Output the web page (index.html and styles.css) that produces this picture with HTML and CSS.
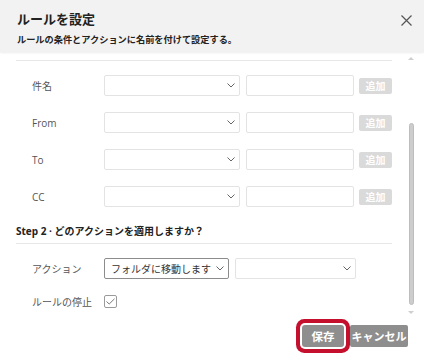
FILE: index.html
```html
<!DOCTYPE html>
<html lang="ja">
  <head>
    <meta charset="UTF-8" />
    <meta name="viewport" content="width=device-width, initial-scale=1.0" />
    <title>ルールを設定</title>
    <link rel="stylesheet" href="styles.css">
  </head>
  <body>
    <div class="dialog">
      <div class="header">
        <div class="title_row">
          <h1>ルールを設定</h1>
          <button class="close" type="button">
            <svg width="11" height="11" viewBox="0 0 11 11"><path d="M0.5 0.5L10.5 10.5M10.5 0.5L0.5 10.5" stroke="#555" stroke-width="1.2" fill="none"/></svg>
          </button>
        </div>
        <p class="sub">ルールの条件とアクションに名前を付けて設定する。</p>
      </div>

      <div class="scroll">
        <div class="content">
          <h2 class="step first">Step 1 · どの条件に当てはまる場合ですか？</h2>

          <div class="row">
            <label>件名</label>
            <div class="select"><span></span><svg width="8" height="5" viewBox="0 0 8 5"><path d="M0.5 0.5L4 4L7.5 0.5" stroke="#666" fill="none"/></svg></div>
            <input type="text" class="text">
            <button class="add" type="button">追加</button>
          </div>
          <div class="row">
            <label>From</label>
            <div class="select"><span></span><svg width="8" height="5" viewBox="0 0 8 5"><path d="M0.5 0.5L4 4L7.5 0.5" stroke="#666" fill="none"/></svg></div>
            <input type="text" class="text">
            <button class="add" type="button">追加</button>
          </div>
          <div class="row">
            <label>To</label>
            <div class="select"><span></span><svg width="8" height="5" viewBox="0 0 8 5"><path d="M0.5 0.5L4 4L7.5 0.5" stroke="#666" fill="none"/></svg></div>
            <input type="text" class="text">
            <button class="add" type="button">追加</button>
          </div>
          <div class="row">
            <label>CC</label>
            <div class="select"><span></span><svg width="8" height="5" viewBox="0 0 8 5"><path d="M0.5 0.5L4 4L7.5 0.5" stroke="#666" fill="none"/></svg></div>
            <input type="text" class="text">
            <button class="add" type="button">追加</button>
          </div>

          <h2 class="step">Step 2 · どのアクションを適用しますか？</h2>

          <div class="row row2">
            <label>アクション</label>
            <div class="select action"><span>フォルダに移動します</span><svg width="8" height="5" viewBox="0 0 8 5"><path d="M0.5 0.5L4 4L7.5 0.5" stroke="#666" fill="none"/></svg></div>
            <div class="select folder"><span></span><svg width="8" height="5" viewBox="0 0 8 5"><path d="M0.5 0.5L4 4L7.5 0.5" stroke="#666" fill="none"/></svg></div>
          </div>
          <div class="row row2">
            <label>ルールの停止</label>
            <span class="check">
              <svg width="9" height="7" viewBox="0 0 9 7"><path d="M0.5 3.5L3.2 6L8.5 0.8" stroke="#777" fill="none"/></svg>
            </span>
          </div>
        </div>

        <div class="scrollbar">
          <span class="arrow up"></span>
          <span class="thumb"></span>
          <span class="arrow down"></span>
        </div>
      </div>

      <div class="footer">
        <button class="btn save" type="button">保存</button>
        <button class="btn cancel" type="button">キャンセル</button>
      </div>
    </div>
  </body>
</html>
```

FILE: styles.css
```css
* {
    margin: 0;
    padding: 0;
    box-sizing: border-box;
}

body {
    background: white;
    font-family: "Open Sans", "Noto Sans CJK JP", sans-serif;
    color: #333;
}

.dialog {
    width: 424px;
    height: 360px;
    display: flex;
    flex-direction: column;
    overflow: hidden;
}

.header {
    height: 52px;
    flex: none;
    background: #f2f2f2;
    padding: 10px 12px 0 17px;
    box-shadow: 0 1px 2px rgba(0, 0, 0, 0.08);
    position: relative;
    z-index: 1;
}

.header .title_row {
    display: flex;
    justify-content: space-between;
    align-items: center;
    height: 18px;
}

.header h1 {
    font-size: 13px;
    line-height: 18px;
    font-weight: 700;
    color: #222;
}

.header .close {
    border: none;
    background: none;
    width: 11px;
    height: 11px;
    display: flex;
    margin-top: 2px;
}

.header .sub {
    margin-top: 5px;
    font-size: 9.2px;
    line-height: 14px;
    font-weight: 700;
    color: #222;
}

.scroll {
    height: 266px;
    flex: none;
    display: flex;
    overflow: hidden;
}

.content {
    width: 392px;
    padding-left: 16px;
}

.step {
    font-size: 10px;
    line-height: 16px;
    font-weight: 700;
    color: #222;
    padding-bottom: 4px;
    border-bottom: 1px solid #e8e8e8;
    margin: 16px 0 14px;
}

.step.first {
    margin-top: -16px;
    padding-bottom: 8px;
}

.row {
    display: flex;
    align-items: center;
    height: 21px;
    margin-bottom: 16px;
}

.row2 {
    margin-bottom: 12px;
}

.row label {
    width: 88px;
    padding-left: 16px;
    font-size: 10px;
    color: #555;
}

.select {
    width: 136px;
    height: 21px;
    border: 1px solid #e3e3e3;
    border-radius: 2px;
    display: flex;
    align-items: center;
    justify-content: space-between;
    padding: 0 4px 0 6px;
    font-size: 10px;
    color: #333;
}

.select.action {
    width: 125px;
    border-color: #8c8c8c;
}

.select.folder {
    width: 121px;
    margin-left: 6px;
}

.text {
    width: 108px;
    height: 21px;
    margin-left: 6px;
    border: 1px solid #e3e3e3;
    border-radius: 2px;
    outline: none;
}

.add {
    width: 33px;
    height: 16px;
    margin-left: 5px;
    border: none;
    border-radius: 2px;
    background: #dadada;
    color: white;
    font-family: inherit;
    font-size: 10px;
    font-weight: 700;
    line-height: 16px;
}

.check {
    width: 13px;
    height: 13px;
    border: 1px solid #9a9a9a;
    border-radius: 2px;
    display: flex;
    align-items: center;
    justify-content: center;
}

.scrollbar {
    width: 32px;
    padding-left: 17px;
    display: flex;
    flex-direction: column;
}

.scrollbar .arrow {
    width: 0;
    height: 0;
    border-left: 3px solid transparent;
    border-right: 3px solid transparent;
    margin-left: -1px;
}

.scrollbar .up {
    margin-top: 5px;
    border-bottom: 3px solid #cfcfcf;
}

.scrollbar .down {
    margin-top: 6px;
    border-top: 3px solid #cfcfcf;
}

.scrollbar .thumb {
    width: 5px;
    height: 182px;
    margin-top: 63px;
    background: #cdcdcd;
    border: 1px solid #bdbdbd;
    border-radius: 3px;
}

.footer {
    flex: 1;
    display: flex;
    justify-content: flex-end;
    gap: 6px;
    padding: 7px 16px 0 0;
}

.btn {
    height: 22px;
    padding: 0;
    border: none;
    border-radius: 2px;
    background: #8e8e8e;
    color: white;
    font-family: inherit;
    font-size: 11.5px;
    font-weight: 700;
}

.btn.save {
    width: 42px;
    box-shadow: 0 0 0 2px white, 0 0 0 6px #c4102d;
    border-radius: 3px;
}

.btn.cancel {
    width: 58px;
    font-size: 11px;
}
```
